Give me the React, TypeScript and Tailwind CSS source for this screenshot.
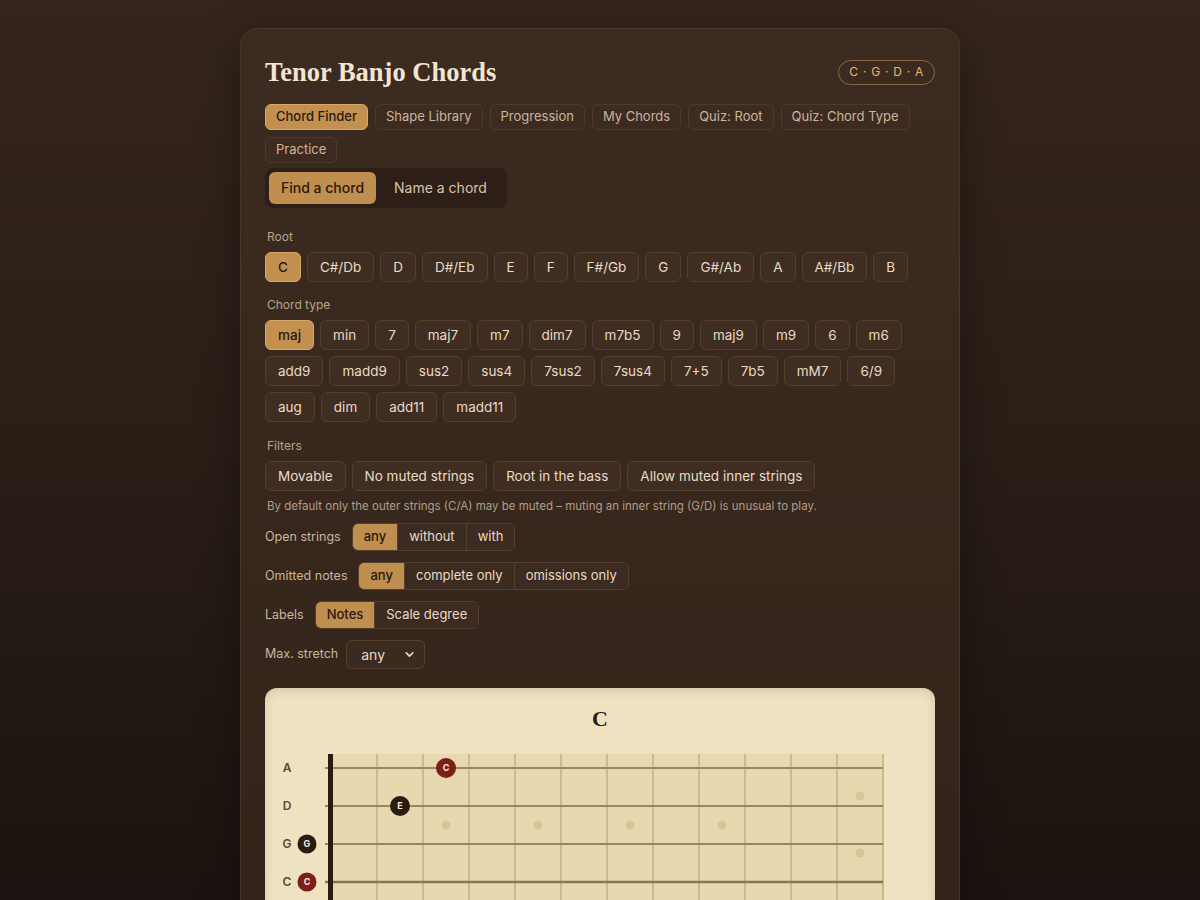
import { useState } from "react";
import { ChevronDown } from "lucide-react";

const tabs = ["Chord Finder", "Shape Library", "Progression", "My Chords", "Quiz: Root", "Quiz: Chord Type", "Practice"];
const roots = ["C", "C#/Db", "D", "D#/Eb", "E", "F", "F#/Gb", "G", "G#/Ab", "A", "A#/Bb", "B"];
const types = [
	"maj", "min", "7", "maj7", "m7", "dim7", "m7b5", "9", "maj9", "m9", "6", "m6",
	"add9", "madd9", "sus2", "sus4", "7sus2", "7sus4", "7+5", "7b5", "mM7", "6/9",
	"aug", "dim", "add11", "madd11",
];
const filters = ["Movable", "No muted strings", "Root in the bass", "Allow muted inner strings"];

const Chip = ({ label, active, onClick }: { label: string; active?: boolean; onClick?: () => void }) => (
	<button
		onClick={onClick}
		className={
			active
				? "h-[30px] px-3 rounded-md border border-[#d6a866] bg-[#c3904f] text-[13.5px] font-medium text-[#2a190e]"
				: "h-[30px] px-3 rounded-md border border-[#533f30] bg-[#3f2d22] text-[13.5px] text-[#eadbc6]"
		}
	>
		{label}
	</button>
);

const Segmented = ({ items, value, onChange }: { items: string[]; value: string; onChange: (v: string) => void }) => (
	<div className="flex h-7 rounded-md border border-[#54402f] overflow-hidden">
		{items.map((it, i) => (
			<button
				key={it}
				onClick={() => onChange(it)}
				className={
					(i > 0 ? "border-l border-[#54402f] " : "") +
					(it === value
						? "px-[11px] bg-[#c08e4e] text-[13px] font-medium text-[#2a190e]"
						: "px-[11px] bg-[#3c2b20] text-[13px] text-[#eadbc6]")
				}
			>
				{it}
			</button>
		))}
	</div>
);

const SectionLabel = ({ children }: { children: string }) => (
	<p className="ml-0.5 mb-1.5 text-xs leading-[18px] text-[#b9a389]">{children}</p>
);

// fretboard drawing, coordinates relative to the diagram panel
const FRET_W = 46;
const NUT_X = 66;
const STRINGS = [
	{ name: "A", y: 23 },
	{ name: "D", y: 61 },
	{ name: "G", y: 99 },
	{ name: "C", y: 137 },
];

const Fretboard = () => {
	const frets = Array.from({ length: 12 }, (_, i) => NUT_X + FRET_W * (i + 1));
	const dotX = (f: number) => NUT_X + FRET_W * (f - 0.5);
	return (
		<svg width="670" height="162" viewBox="0 0 670 162" className="block">
			<rect x={NUT_X} y="9" width={FRET_W * 12} height="146" fill="#e8d8b0" />
			{frets.map((x) => (
				<line key={x} x1={x} y1="9" x2={x} y2="155" stroke="#cdb98b" strokeWidth="2" />
			))}
			{[3, 5, 7, 9].map((f) => (
				<circle key={f} cx={dotX(f)} cy="80" r="4.5" fill="#dcc594" />
			))}
			<circle cx={dotX(12)} cy="51" r="4.5" fill="#dcc594" />
			<circle cx={dotX(12)} cy="108" r="4.5" fill="#dcc594" />
			{STRINGS.map((s, i) => (
				<g key={s.name}>
					<line x1="60" y1={s.y} x2={NUT_X + FRET_W * 12} y2={s.y} stroke={i === 3 ? "#8b7550" : "#9a8661"} strokeWidth={i === 3 ? 2.5 : 2} />
					<text x="22" y={s.y + 4} textAnchor="middle" fontSize="12" fontWeight="600" fill="#5a4937" fontFamily="Inter, sans-serif">
						{s.name}
					</text>
				</g>
			))}
			<rect x="63" y="9" width="5" height="146" fill="#2a1b12" />
			{[
				{ x: dotX(3), y: 23, n: "C", c: "#7c1f19" },
				{ x: dotX(2), y: 61, n: "E", c: "#2a1c13" },
				{ x: 42, y: 99, n: "G", c: "#2a1c13" },
				{ x: 42, y: 137, n: "C", c: "#7c1f19" },
			].map((d, i) => (
				<g key={i}>
					<circle cx={d.x} cy={d.y} r={i > 1 ? 9.5 : 10} fill={d.c} />
					<text x={d.x} y={d.y + 3.2} textAnchor="middle" fontSize="9" fontWeight="700" fill="#f6ecdc" fontFamily="Inter, sans-serif">
						{d.n}
					</text>
				</g>
			))}
		</svg>
	);
};

export default function App() {
	const [tab, setTab] = useState("Chord Finder");
	const [mode, setMode] = useState("find");
	const [root, setRoot] = useState("C");
	const [type, setType] = useState("maj");
	const [open, setOpen] = useState("any");
	const [omit, setOmit] = useState("any");
	const [labels, setLabels] = useState("Notes");

	return (
		<div className="min-h-screen bg-fixed bg-gradient-to-b from-[#34251c] via-[#2a1e17] to-[#1b130f] font-[Inter,sans-serif] pt-7 pb-10">
			<div className="mx-auto w-[720px] rounded-[18px] border border-[#4a3629] bg-gradient-to-b from-[#3c2b20] to-[#32231a] px-6 pt-[27px] pb-6 shadow-[0_10px_40px_rgba(0,0,0,0.35)]">
				{/* header */}
				<div className="flex items-center justify-between h-8 mb-4">
					<h1 className="font-['Liberation_Serif',serif] font-bold text-[26.5px] leading-8 text-[#f3e5d1]">Tenor Banjo Chords</h1>
					<span className="h-[25px] px-2.5 flex items-center rounded-full border border-[#8a6940] text-xs tracking-[0.06em] text-[#e3b878]">
						C · G · D · A
					</span>
				</div>

				{/* tabs */}
				<div className="flex flex-wrap gap-[7px]">
					{tabs.map((t) => (
						<button
							key={t}
							onClick={() => setTab(t)}
							className={
								t === tab
									? "h-[26px] px-2.5 rounded-md border border-[#d6a866] bg-[#c3904f] text-[13px] font-medium text-[#2a190e]"
									: "h-[26px] px-2.5 rounded-md border border-[#4e3a2c] bg-[#3d2b21] text-[13px] text-[#cbb69c]"
							}
						>
							{t}
						</button>
					))}
				</div>

				{/* finder mode */}
				<div className="mt-[5px] inline-flex gap-0.5 p-1 rounded-lg bg-[#2d1f17]">
					<button
						onClick={() => setMode("find")}
						className={mode === "find" ? "h-8 px-3 rounded-md bg-[#c08e4e] text-sm font-medium text-[#2a190e]" : "h-8 px-3 rounded-md text-sm text-[#d9c4a9]"}
					>
						Find a chord
					</button>
					<button
						onClick={() => setMode("name")}
						className={mode === "name" ? "h-8 px-4 rounded-md bg-[#c08e4e] text-sm font-medium text-[#2a190e]" : "h-8 px-4 rounded-md text-sm text-[#d9c4a9]"}
					>
						Name a chord
					</button>
				</div>

				<div className="mt-5">
					<SectionLabel>Root</SectionLabel>
					<div className="flex flex-wrap gap-1.5">
						{roots.map((r) => (
							<Chip key={r} label={r} active={r === root} onClick={() => setRoot(r)} />
						))}
					</div>
				</div>

				<div className="mt-[14px]">
					<SectionLabel>Chord type</SectionLabel>
					<div className="flex flex-wrap gap-1.5">
						{types.map((t) => (
							<Chip key={t} label={t} active={t === type} onClick={() => setType(t)} />
						))}
					</div>
				</div>

				<div className="mt-[15px]">
					<SectionLabel>Filters</SectionLabel>
					<div className="flex flex-wrap gap-1.5">
						{filters.map((f) => (
							<Chip key={f} label={f} />
						))}
					</div>
					<p className="ml-0.5 mt-[7px] text-[11.5px] leading-4 text-[#b49e84]">
						By default only the outer strings (C/A) may be muted – muting an inner string (G/D) is unusual to play.
					</p>
				</div>

				<div className="mt-[9px] flex flex-col gap-[11px]">
					<div className="flex items-center gap-[11px]">
						<span className="text-[12.5px] text-[#c9b59b]">Open strings</span>
						<Segmented items={["any", "without", "with"]} value={open} onChange={setOpen} />
					</div>
					<div className="flex items-center gap-[11px]">
						<span className="text-[12.5px] text-[#c9b59b]">Omitted notes</span>
						<Segmented items={["any", "complete only", "omissions only"]} value={omit} onChange={setOmit} />
					</div>
					<div className="flex items-center gap-[11px]">
						<span className="text-[12.5px] text-[#c9b59b]">Labels</span>
						<Segmented items={["Notes", "Scale degree"]} value={labels} onChange={setLabels} />
					</div>
					<div className="flex items-center gap-2">
						<span className="text-[12.5px] text-[#c9b59b]">Max. stretch</span>
						<div className="relative">
							<select className="appearance-none h-[29px] w-[79px] pl-[14px] rounded-md border border-[#54402f] bg-[#3a2a1f] text-sm text-[#eadbc6] outline-none">
								<option>any</option>
								<option>3</option>
								<option>4</option>
								<option>5</option>
							</select>
							<ChevronDown size={13} strokeWidth={3} className="absolute right-[9px] top-[8px] text-[#eadbc6] pointer-events-none" />
						</div>
					</div>
				</div>

				{/* diagram */}
				<div className="mt-[19px] rounded-xl bg-[#eee2c1] shadow-[inset_0_3px_10px_rgba(80,50,20,0.14)] pt-[17px] pb-5">
					<p className="text-center font-['Liberation_Serif',serif] font-bold text-[22px] leading-7 text-[#2a1c13]">C</p>
					<div className="mt-3">
						<Fretboard />
					</div>
				</div>
			</div>
		</div>
	);
}
